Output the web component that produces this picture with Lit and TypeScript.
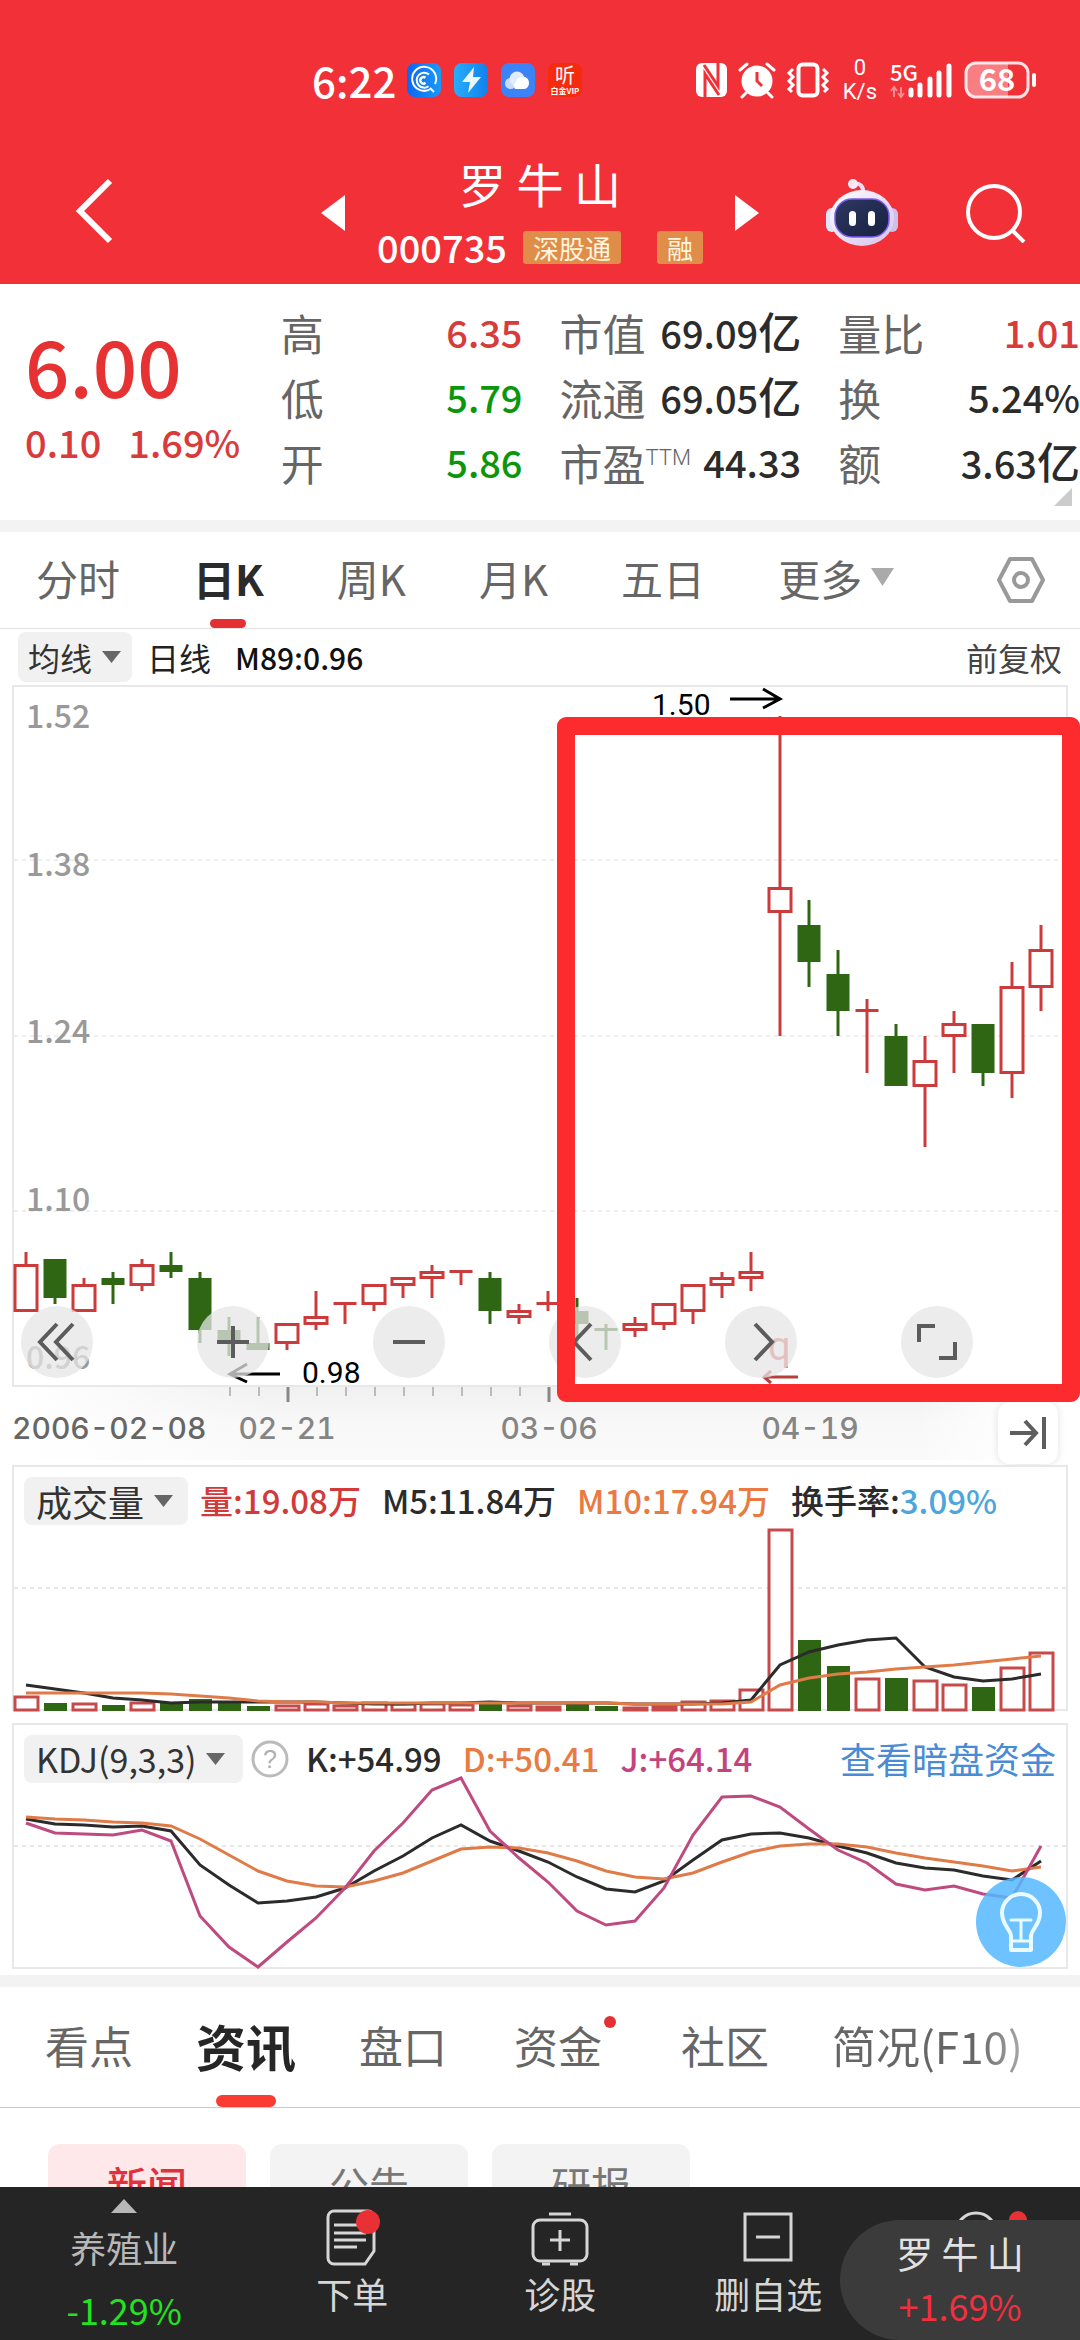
import { LitElement, html, svg, css, nothing } from "lit";
import { customElement, state } from "lit/decorators.js";

type Candle = { up: boolean; high: number; top: number; bottom: number; low: number };

const FIRST_X = 26;
const STEP = 29;
const xAt = (i: number) => FIRST_X + STEP * i;

// direction, high, body top, body bottom, low (plot units)
const CANDLES: Candle[] = (
  [
    [1, 1252, 1264, 1312, 1312], [0, 1259, 1259, 1298, 1304], [1, 1278, 1284, 1312, 1312],
    [0, 1272, 1278, 1285, 1304], [1, 1259, 1264, 1286, 1291], [0, 1252, 1265, 1272, 1278],
    [0, 1272, 1278, 1330, 1343], [0, 1317, 1330, 1343, 1356], [0, 1317, 1343, 1350, 1350],
    [1, 1323, 1323, 1344, 1350], [1, 1291, 1316, 1325, 1330], [1, 1302, 1302, 1305, 1324],
    [1, 1284, 1284, 1305, 1311], [1, 1277, 1277, 1286, 1298], [1, 1265, 1271, 1279, 1298],
    [1, 1270, 1270, 1273, 1285], [0, 1272, 1278, 1311, 1324], [1, 1304, 1310, 1318, 1324],
    [1, 1291, 1302, 1305, 1311], [0, 1298, 1311, 1324, 1343], [0, 1324, 1328, 1331, 1350],
    [1, 1317, 1323, 1331, 1337], [1, 1303, 1303, 1325, 1330], [1, 1284, 1284, 1312, 1324],
    [1, 1272, 1277, 1286, 1298], [1, 1252, 1271, 1279, 1291], [1, 716, 887, 913, 1036],
    [0, 900, 925, 962, 987], [0, 950, 974, 1011, 1036], [1, 999, 1009, 1012, 1073],
    [0, 1024, 1036, 1086, 1086], [1, 1036, 1060, 1087, 1147], [1, 1011, 1023, 1037, 1073],
    [0, 1024, 1024, 1073, 1086], [1, 962, 986, 1074, 1098], [1, 925, 949, 988, 1011],
  ] as number[][]
).map(([up, high, top, bottom, low]) => ({ up: up === 1, high, top, bottom, low }));

const VOLUME_TOPS = [
  1696, 1703, 1703, 1705, 1702, 1703, 1699, 1703, 1706, 1705, 1703, 1705, 1702, 1703, 1703, 1704, 1704, 1705,
  1706, 1704, 1706, 1707, 1706, 1701, 1700, 1689, 1529, 1640, 1666, 1678, 1678, 1680, 1684, 1687, 1667, 1652,
];
const M5 = [
  1685, 1689, 1693, 1698, 1700, 1703, 1702, 1702, 1702, 1702, 1702, 1703, 1704, 1704, 1703, 1703, 1702, 1703,
  1703, 1703, 1703, 1704, 1704, 1704, 1703, 1700, 1665, 1652, 1645, 1640, 1638, 1667, 1677, 1681, 1679, 1674,
];
const M10 = [
  1693, 1693, 1693, 1693, 1693, 1694, 1696, 1698, 1701, 1702, 1702, 1703, 1703, 1703, 1703, 1703, 1703, 1703,
  1703, 1703, 1703, 1704, 1704, 1704, 1704, 1702, 1685, 1678, 1674, 1672, 1669, 1667, 1665, 1662, 1659, 1656,
];
const K = [
  1819, 1824, 1825, 1827, 1826, 1831, 1865, 1885, 1903, 1901, 1897, 1888, 1871, 1856, 1838, 1825, 1841, 1851,
  1862, 1877, 1889, 1892, 1881, 1860, 1840, 1834, 1833, 1838, 1846, 1853, 1863, 1868, 1870, 1876, 1880, 1861,
];
const D = [
  1817, 1819, 1820, 1822, 1823, 1826, 1839, 1855, 1871, 1881, 1886, 1887, 1881, 1873, 1861, 1849, 1847, 1848,
  1853, 1861, 1871, 1877, 1879, 1873, 1862, 1852, 1846, 1844, 1844, 1847, 1853, 1858, 1862, 1866, 1871, 1867,
];
const J = [
  1823, 1833, 1834, 1835, 1830, 1841, 1916, 1947, 1967, 1942, 1918, 1888, 1851, 1823, 1790, 1778, 1831, 1858,
  1882, 1911, 1925, 1921, 1888, 1835, 1797, 1796, 1807, 1829, 1850, 1863, 1884, 1890, 1886, 1894, 1898, 1846,
];

const points = (ys: number[]) => ys.map((y, i) => `${xAt(i)},${y}`).join(" ");

const caret = html`<svg class="caret" viewBox="0 0 20 12" preserveAspectRatio="none" aria-hidden="true"><path d="M0 0H20L10 12Z" fill="currentColor" /></svg>`;

@customElement("status-bar")
export class StatusBar extends LitElement {
  static styles = css`
    :host { display: flex; align-items: center; justify-content: space-between; height: 60px; padding: 50px 42px 32px 312px; color: #fff; }
    .left, .right { display: flex; align-items: center; }
    .time { font-size: 42px; line-height: 48px; font-weight: 500; margin-right: 11px; }
    .apps { display: flex; gap: 13px; }
    .app { width: 34px; height: 34px; display: block; overflow: visible; }
    .right { gap: 10px; }
    .speed { display: flex; flex-direction: column; align-items: center; font-family: Roboto, sans-serif; font-size: 22px; line-height: 24px; padding: 0 3px; }
    .ico { display: block; height: 38px; overflow: visible; }
  `;
  render() {
    return html`
      <div class="left">
        <span class="time">6:22</span>
        <div class="apps">
          <svg class="app" viewBox="0 0 34 34" aria-hidden="true">
            <defs><linearGradient id="a" x1="0" x2="1"><stop offset="0" stop-color="#0b66f5" /><stop offset="1" stop-color="#1a9af8" /></linearGradient></defs>
            <rect width="34" height="34" rx="8" fill="url(#a)" />
            <g fill="none" stroke="#fff" stroke-width="2">
              <path d="M23.500 26A12 12 0 1 1 28 21" />
              <path d="M21.500 23.300A7.500 7.500 0 1 1 22 11.400" />
              <path d="M18.500 19.800A3.200 3.200 0 1 1 18.500 14.800" stroke-width="2.400" />
              <path d="M23 25L27 29" />
            </g>
          </svg>
          <svg class="app" viewBox="0 0 34 34" aria-hidden="true">
            <defs><linearGradient id="b" x1="0" x2="1"><stop offset="0" stop-color="#28adfb" /><stop offset="1" stop-color="#1181ec" /></linearGradient></defs>
            <rect width="34" height="34" rx="8" fill="url(#b)" />
            <path d="M20 4L8 19H16L14 30L27 14H19Z" fill="#e9f8ff" />
          </svg>
          <svg class="app" viewBox="0 0 34 34" aria-hidden="true">
            <rect width="34" height="34" rx="8" fill="#3b83f6" />
            <circle cx="9.500" cy="20.500" r="5.500" fill="#c5dcfd" />
            <circle cx="16" cy="16" r="7.500" fill="#e0edff" />
            <path d="M14 26A5 5 0 0 1 15 19A7 7 0 0 1 24 14A6.500 6.500 0 0 1 24 26Z" fill="#fff" />
          </svg>
          <svg class="app" viewBox="0 0 34 34" aria-hidden="true">
            <rect width="34" height="34" rx="8" fill="#f62a0c" />
            <text x="17" y="20" font-size="20" fill="#fff" text-anchor="middle">听</text>
            <text x="17" y="31" font-size="8" font-weight="700" fill="#fff" text-anchor="middle">白金VIP</text>
          </svg>
        </div>
      </div>
      <div class="right">
        <svg class="ico" width="32" viewBox="0 0 32 38" role="img" aria-label="NFC">
          <rect x="0" y="2" width="31" height="34" rx="6" fill="#fff" />
          <path d="M9 36V13L23 34M22 2V25L8 4" fill="none" stroke="#f23038" stroke-width="3" />
        </svg>
        <svg class="ico" width="38" viewBox="0 0 38 38" role="img" aria-label="Alarm">
          <circle cx="19" cy="20" r="15.500" fill="#fff" />
          <path d="M19 11V20L24 25" fill="none" stroke="#f23038" stroke-width="3" />
          <path d="M2 9L9 3M36 9L29 3M8 32L4 36M30 32L34 36" stroke="#fff" stroke-width="3" stroke-linecap="round" />
        </svg>
        <svg class="ico" width="44" viewBox="0 0 44 38" role="img" aria-label="Vibrate">
          <rect x="12.500" y="3.500" width="19" height="31" rx="4" fill="none" stroke="#fff" stroke-width="4" />
          <path d="M7 8L3 12L7 16L3 20L7 24L3 28L6 31M37 8L41 12L37 16L41 20L37 24L41 28L38 31" fill="none" stroke="#fff" stroke-width="3" />
        </svg>
        <div class="speed"><span>0</span><span>K/s</span></div>
        <svg class="ico" width="64" viewBox="0 0 64 38" role="img" aria-label="5G signal">
          <text x="0" y="20" font-size="22" font-weight="500" fill="#fff">5G</text>
          <path d="M4 36V27M1 30L4 26L7 30M11 26V35M8 32L11 36L14 32" fill="none" stroke="#fa8c8f" stroke-width="2" />
          <path d="M21 29V34M30 24V34M40 18V34M49 12V34M59 5V34" stroke="#fff" stroke-width="5" stroke-linecap="round" />
        </svg>
        <svg class="ico" width="74" viewBox="0 0 74 38" role="img" aria-label="Battery 68%">
          <path d="M10 2H44V36H10A8 8 0 0 1 2 28V10A8 8 0 0 1 10 2Z" fill="#f87e82" />
          <rect x="2" y="2" width="62" height="34" rx="10" fill="none" stroke="#fff" stroke-opacity=".85" stroke-width="3" />
          <path d="M70 14V24" stroke="#fff" stroke-width="4" stroke-linecap="round" />
          <text x="33" y="30" font-size="31" font-weight="700" fill="#fff" text-anchor="middle">68</text>
        </svg>
      </div>
    `;
  }
}

@customElement("stock-nav")
export class StockNav extends LitElement {
  static styles = css`
    :host { display: grid; grid-template-columns: 1fr 438px 1fr; align-items: center; height: 142px; color: #fff; }
    button { background: none; border: 0; padding: 0; margin: 0; display: block; }
    svg { display: block; }
    .back { margin: 0 0 4px 74px; }
    .title { display: flex; align-items: center; justify-content: space-between; }
    .lines { display: flex; flex-direction: column; align-items: center; padding-top: 4px; }
    h1 { margin: 0; font-size: 47px; line-height: 64px; font-weight: 400; white-space: pre; }
    .sub { display: flex; align-items: center; height: 64px; gap: 16px; }
    .code { font-size: 38px; line-height: 48px; font-weight: 500; }
    .badge { background: #e08d4a; color: #fff6df; font-size: 26px; line-height: 33px; padding: 0 10px; border-radius: 3px; }
    .badge + .badge { margin-left: 20px; }
    .tools { display: flex; align-items: center; justify-content: flex-end; gap: 68px; padding-right: 54px; }
  `;
  render() {
    return html`
      <button class="back" aria-label="返回">
        <svg width="40" height="68" viewBox="0 0 40 68"><path d="M36 4L6 34L36 64" fill="none" stroke="#fff" stroke-width="6" /></svg>
      </button>
      <div class="title">
        <button aria-label="上一只"><svg width="24" height="36" viewBox="0 0 24 36"><path d="M24 0V36L0 18Z" fill="#fff" /></svg></button>
        <div class="lines">
          <h1>罗 牛 山</h1>
          <div class="sub"><span class="code">000735</span><span class="badge">深股通</span><span class="badge">融</span></div>
        </div>
        <button aria-label="下一只"><svg width="24" height="36" viewBox="0 0 24 36"><path d="M0 0V36L24 18Z" fill="#fff" /></svg></button>
      </div>
      <div class="tools">
        <button aria-label="智能助手">
          <svg width="72" height="70" viewBox="0 0 72 70">
            <defs>
              <linearGradient id="head" x1="0" y1="0" x2="1" y2="1"><stop offset="0" stop-color="#ffffff" /><stop offset="1" stop-color="#d5c2ee" /></linearGradient>
              <linearGradient id="face" x1="0" y1="0" x2="1" y2="1"><stop offset="0" stop-color="#2e3863" /><stop offset="1" stop-color="#18213f" /></linearGradient>
            </defs>
            <path d="M27 6C34 4 38 9 37 15" fill="none" stroke="#e9dcf5" stroke-width="4" />
            <circle cx="27" cy="6" r="5" fill="#fbe9f3" />
            <rect x="0" y="30" width="12" height="24" rx="6" fill="#dfe6fa" />
            <rect x="60" y="30" width="12" height="24" rx="6" fill="#cfc0ea" />
            <ellipse cx="36" cy="40" rx="32" ry="28" fill="url(#head)" />
            <rect x="9" y="21" width="54" height="38" rx="17" fill="url(#face)" stroke="#7a5cf0" stroke-width="1.500" />
            <rect x="23" y="33" width="7" height="15" rx="3.500" fill="#fff" />
            <rect x="42" y="33" width="7" height="15" rx="3.500" fill="#fff" />
          </svg>
        </button>
        <button aria-label="搜索">
          <svg width="60" height="60" viewBox="0 0 60 60"><circle cx="28" cy="29" r="26" fill="none" stroke="#fff" stroke-width="4" /><path d="M46 47L58 59" stroke="#fff" stroke-width="4" /></svg>
        </button>
      </div>
    `;
  }
}

const QUOTES: { label: string; sup?: string; value: string; unit?: string; tone: string }[][] = [
  [
    { label: "高", value: "6.35", tone: "up" },
    { label: "低", value: "5.79", tone: "down" },
    { label: "开", value: "5.86", tone: "down" },
  ],
  [
    { label: "市值", value: "69.09", unit: "亿", tone: "flat" },
    { label: "流通", value: "69.05", unit: "亿", tone: "flat" },
    { label: "市盈", sup: "TTM", value: "44.33", tone: "flat" },
  ],
  [
    { label: "量比", value: "1.01", tone: "up" },
    { label: "换", value: "5.24%", tone: "flat" },
    { label: "额", value: "3.63", unit: "亿", tone: "flat" },
  ],
];

@customElement("quote-panel")
export class QuotePanel extends LitElement {
  static styles = css`
    :host { display: grid; grid-template-columns: 26% 1fr; height: 236px; position: relative; }
    .last { padding: 34px 0 0 25px; color: #e63232; }
    .price { font-size: 78px; line-height: 92px; font-weight: 500; }
    .change { display: flex; gap: 27px; margin-top: 6px; font-size: 38px; line-height: 52px; font-weight: 500; color: #d93a3a; }
    .cols { display: grid; grid-template-columns: repeat(3, 1fr); gap: 37px; padding-top: 15px; }
    dl { margin: 0; }
    .pair { display: flex; justify-content: space-between; align-items: center; height: 65px; white-space: nowrap; }
    dt { font-size: 43px; line-height: 60px; color: #666; display: flex; }
    dd { margin: 0; font-size: 38px; line-height: 60px; font-weight: 500; }
    .unit { font-size: 43px; }
    sup { font-size: 22px; line-height: 28px; font-family: Roboto, sans-serif; padding-top: 12px; font-weight: 300; }
    .up { color: #d93a3a; }
    .down { color: #0c960c; }
    .flat { color: #2b2b2b; }
    .more { position: absolute; right: 8px; bottom: 14px; width: 18px; height: 18px; }
  `;
  render() {
    return html`
      <div class="last">
        <div class="price">6.00</div>
        <div class="change"><span>0.10</span><span>1.69%</span></div>
      </div>
      <div class="cols">
        ${QUOTES.map(
          (col) => html`<dl>${col.map(
            (q) => html`<div class="pair"><dt>${q.label}${q.sup ? html`<sup>${q.sup}</sup>` : nothing}</dt><dd class=${q.tone}>${q.value}${q.unit ? html`<span class="unit">${q.unit}</span>` : nothing}</dd></div>`
          )}</dl>`
        )}
      </div>
      <svg class="more" viewBox="0 0 18 18" aria-hidden="true"><path d="M18 0V18H0Z" fill="#ccc" /></svg>
    `;
  }
}

const pillStyles = css`
  select { appearance: none; border: 0; padding: 0; margin: 0; background: none; font: inherit; color: inherit; }
  .pill { display: flex; align-items: center; gap: 9px; background: #f1f1f1; border-radius: 8px; color: #333; }
  .caret { width: 19px; height: 12px; color: #666; }
`;

@customElement("period-tabs")
export class PeriodTabs extends LitElement {
  static styles = [
    pillStyles,
    css`
      :host { display: block; }
      nav { display: flex; align-items: stretch; height: 96px; gap: 73px; padding: 0 34px 0 36px; border-bottom: 1px solid #e3e3e3; }
      button { background: none; border: 0; padding: 0; font: inherit; color: inherit; position: relative; }
      .tab { font-size: 42px; color: #666; padding-bottom: 6px; }
      .tab.on { color: #2b2b2b; font-weight: 700; }
      .tab.on::after { content: ""; position: absolute; bottom: 0; left: 50%; width: 36px; height: 9px; margin-left: -18px; border-radius: 5px; background: #e33033; }
      .more { display: flex; align-items: center; gap: 8px; }
      .more .caret { width: 23px; height: 18px; color: #aaa; }
      .gear { margin-left: auto; display: flex; align-items: center; }
      .bar { display: flex; align-items: center; height: 55px; padding: 0 18px; font-size: 32px; color: #222; }
      .pill { padding: 0 11px 0 10px; height: 50px; }
      .kind { margin-left: 15px; }
      .ma { margin-left: 24px; font-size: 30px; font-weight: 500; color: #111; }
      .adj { margin-left: auto; color: #444; }
    `,
  ];
  @state() private active = "日K";
  render() {
    return html`
      <nav>
        ${["分时", "日K", "周K", "月K", "五日"].map(
          (t) => html`<button class="tab ${t === this.active ? "on" : ""}" @click=${() => (this.active = t)}>${t}</button>`
        )}
        <label class="tab more"><select aria-label="更多周期"><option>更多</option></select>${caret}</label>
        <button class="gear" aria-label="设置">
          <svg width="50" height="48" viewBox="0 0 50 48" fill="none" stroke="#999" stroke-width="4">
            <path d="M14 3H36L47 24L36 45H14L3 24Z" stroke-linejoin="round" /><circle cx="25" cy="24" r="7" />
          </svg>
        </button>
      </nav>
      <div class="bar">
        <label class="pill"><select aria-label="主图指标"><option>均线</option></select>${caret}</label>
        <span class="kind">日线</span><span class="ma">M89:0.96</span>
        <button class="adj">前复权</button>
      </div>
    `;
  }
}

@customElement("kline-chart")
export class KlineChart extends LitElement {
  static styles = css`
    :host { display: block; position: relative; }
    .plot { display: block; width: 100%; }
    .axis { font-size: 32px; fill: #999; font-weight: 500; }
    .note { font-family: Roboto, sans-serif; font-size: 30px; fill: #000; }
    .date { font-family: Inter, sans-serif; font-size: 30px; font-weight: 500; fill: #858585; font-variant-numeric: tabular-nums; }
    .date.first { fill: #666; }
    .controls { position: absolute; left: 21px; top: 622px; display: flex; gap: 104px; }
    button { border: 0; padding: 0; }
    .round { width: 72px; height: 72px; border-radius: 50%; background: rgba(229, 229, 229, 0.75); }
    .round svg, .end svg { display: block; margin: auto; }
    .end { position: absolute; right: 22px; top: 718px; width: 60px; height: 62px; border-radius: 12px; background: #fff; box-shadow: 0 0 8px rgba(0, 0, 0, 0.12); }
    .mark { position: absolute; left: 51.6%; right: 0; top: 33px; height: 649px; border: 18px solid #fd2b2e; border-radius: 9px; pointer-events: none; }
  `;
  private candle(c: Candle, i: number) {
    const x = xAt(i);
    const color = c.up ? "#cb3b3b" : "#2f6614";
    const h = c.bottom - c.top;
    const hollow = c.up && h > 4;
    return svg`
      ${c.high < c.top ? svg`<path d="M${x} ${c.high}V${c.top}" stroke=${color} stroke-width="3" />` : nothing}
      ${c.low > c.bottom ? svg`<path d="M${x} ${c.bottom}V${c.low}" stroke=${color} stroke-width="3" />` : nothing}
      ${hollow
        ? svg`<rect x=${x - 11} y=${c.top + 1.5} width="22" height=${h - 3} fill="#fff" stroke=${color} stroke-width="3" />`
        : svg`<rect x=${x - 11.5} y=${c.top} width="23" height=${h} fill=${color} />`}
    `;
  }
  private icon(kind: number) {
    const shapes = [
      "M36 16L19 34L36 52M52 16L35 34L52 52",
      "M20 34H52M36 18V50",
      "M20 34H52",
      "M42 16L25 34L42 52",
      "M30 16L47 34L30 52",
      "M18 34V18H34M54 34V50H38",
    ];
    return html`<svg width="72" height="72" viewBox="0 -2 72 72"><path d=${shapes[kind]} fill="none" stroke="#5c5c5c" stroke-width="4" /></svg>`;
  }
  render() {
    const minor = Array.from({ length: 13 }, (_, i) => i + 7);
    return html`
      <svg class="plot" viewBox="0 684 1080 776">
        <defs>
          <linearGradient id="shade" x1="0" x2="0" y1="0" y2="1"><stop offset="0" stop-color="#f0f0f0" /><stop offset=".5" stop-color="#f8f8f8" /><stop offset="1" stop-color="#fafafa" /></linearGradient>
          <linearGradient id="side" x1="0" x2="1"><stop offset=".02" stop-color="#fff" /><stop offset=".25" stop-color="#fff" stop-opacity="0" /><stop offset=".85" stop-color="#fff" stop-opacity="0" /><stop offset=".94" stop-color="#fff" /></linearGradient>
        </defs>
        <rect x="0" y="1386" width="1080" height="74" fill="url(#shade)" />
        <rect x="0" y="1386" width="1080" height="74" fill="url(#side)" />
        <rect x="13" y="686" width="1054" height="700" fill="#fff" stroke="#e8e8e8" stroke-width="2" />
        ${[860, 1036, 1211].map((y) => svg`<path d="M14 ${y}H1066" stroke="#dcdcdc" stroke-width="1" stroke-dasharray="4 4" />`)}
        ${[["1.52", 728], ["1.38", 876], ["1.24", 1043], ["1.10", 1211], ["0.96", 1369]].map(
          ([t, y]) => svg`<text class="axis" x="26" y=${y}>${t}</text>`
        )}
        ${minor.map((i) => svg`<path d="M${xAt(i) + 1} 1387V1396" stroke="#bbb" stroke-width="2" />`)}
        ${[9, 18, 27].map((i) => svg`<path d="M${xAt(i) + 1} 1387V1402" stroke="#888" stroke-width="3" />`)}
        ${CANDLES.map((c, i) => this.candle(c, i))}
        <text class="note" x="652" y="715">1.50</text>
        <path d="M730 699H780M763 689L780 699L763 708" fill="none" stroke="#000" stroke-width="3" />
        <text class="note" x="302" y="1383">0.98</text>
        <path d="M280 1374H230M247 1364L230 1374L247 1382" fill="none" stroke="#000" stroke-width="3" />
        <text x="768" y="1360" font-family="Roboto" font-size="40" fill="#d9534f">q</text>
        <path d="M798 1377H764M771 1371L764 1377L771 1383" fill="none" stroke="#b8403c" stroke-width="3" />
        <text class="date first" x="12" y="1439">2006-02-08</text>
        <text class="date" x="287" y="1439" text-anchor="middle">02-21</text>
        <text class="date" x="549" y="1439" text-anchor="middle">03-06</text>
        <text class="date" x="810" y="1439" text-anchor="middle">04-19</text>
      </svg>
      <div class="controls">
        ${["最早", "放大", "缩小", "左移", "右移", "全屏"].map(
          (name, i) => html`<button class="round" aria-label=${name}>${this.icon(i)}</button>`
        )}
      </div>
      <button class="end" aria-label="最新">
        <svg width="40" height="36" viewBox="0 0 40 36" fill="none" stroke="#5e5e5e" stroke-width="4"><path d="M2 18H27M17 6L28 18L17 30M36 2V34" /></svg>
      </button>
      <div class="mark"></div>
    `;
  }
}

const legendStyles = css`
  :host { display: grid; position: relative; }
  .plot, .legend { grid-area: 1 / 1; }
  .plot { display: block; width: 100%; }
  .legend { display: flex; align-items: center; align-self: start; height: 48px; font-size: 33px; line-height: 44px; gap: 21px; padding: 0 24px; font-weight: 500; color: #2b2b2b; white-space: nowrap; z-index: 1; }
  .legend > span { padding-bottom: 3px; }
  .pill { padding: 0 15px 0 12px; height: 48px; font-weight: 400; }
  .orange { color: #e87a42; }
`;

@customElement("volume-chart")
export class VolumeChart extends LitElement {
  static styles = [
    pillStyles,
    legendStyles,
    css`
      .legend { margin-top: 17px; }
      .pill { font-size: 36px; margin-right: -9px; }
      .red { color: #d23a3a; }
      .blue { color: #4aa6dc; }
    `,
  ];
  render() {
    return html`
      <svg class="plot" viewBox="0 1460 1080 256">
        <rect x="13" y="1466" width="1054" height="244" fill="#fff" stroke="#e8e8e8" stroke-width="2" />
        <path d="M14 1588H1066" stroke="#e8e8e8" stroke-width="2" stroke-dasharray="4 4" />
        ${VOLUME_TOPS.map((y, i) => {
          const x = xAt(i);
          const h = 1711 - y;
          return CANDLES[i].up
            ? svg`<rect x=${x - 11} y=${y + 1} width="23" height=${Math.max(h - 2, 2)} fill="#fff" stroke="#c64a4a" stroke-width="3" />`
            : svg`<rect x=${x - 11} y=${y} width="23" height=${h} fill="#2f6614" />`;
        })}
        <polyline points=${points(M5)} fill="none" stroke="#2b2b2b" stroke-width="3" />
        <polyline points=${points(M10)} fill="none" stroke="#e07b48" stroke-width="3" />
      </svg>
      <div class="legend">
        <label class="pill"><select aria-label="副图指标"><option>成交量</option></select>${caret}</label>
        <span class="red">量:19.08万</span><span>M5:11.84万</span><span class="orange">M10:17.94万</span>
        <span>换手率:<span class="blue">3.09%</span></span>
      </div>
    `;
  }
}

@customElement("kdj-chart")
export class KdjChart extends LitElement {
  static styles = [
    pillStyles,
    legendStyles,
    css`
      .legend { margin-top: 19px; padding-right: 24px; }
      .pink { color: #c5437c; }
      .pill { padding-right: 18px; font-size: 34px; }
      .help { margin: 0 -4px 0 -13px; border: 0; padding: 0; background: none; }
      .help svg { display: block; overflow: visible; }
      a { margin-left: auto; font-size: 36px; color: #4a8bd6; text-decoration: none; padding-bottom: 3px; font-weight: 400; }
      .tip { position: absolute; right: 14px; top: 161px; width: 90px; height: 90px; border: 0; padding: 0; border-radius: 50%; background: rgba(84, 183, 255, 0.85); z-index: 2; }
      .tip svg { display: block; margin: auto; }
    `,
  ];
  render() {
    return html`
      <svg class="plot" viewBox="0 1716 1080 259">
        <rect x="13" y="1724" width="1054" height="244" fill="#fff" stroke="#e8e8e8" stroke-width="2" />
        <path d="M14 1846H1066" stroke="#e8e8e8" stroke-width="2" stroke-dasharray="4 4" />
        <polyline points=${points(K)} fill="none" stroke="#2b2b2b" stroke-width="3" />
        <polyline points=${points(D)} fill="none" stroke="#e07b48" stroke-width="3" />
        <polyline points=${points(J)} fill="none" stroke="#bf4a80" stroke-width="3" />
      </svg>
      <div class="legend">
        <label class="pill"><select aria-label="副图指标"><option>KDJ(9,3,3)</option></select>${caret}</label>
        <button class="help" aria-label="指标说明">
          <svg width="38" height="38" viewBox="0 0 38 38"><circle cx="19" cy="19" r="17" fill="none" stroke="#bbb" stroke-width="3" /><text x="19" y="28" font-size="25" text-anchor="middle" fill="#b0b0b0">?</text></svg>
        </button>
        <span>K:+54.99</span><span class="orange">D:+50.41</span><span class="pink">J:+64.14</span>
        <a href="#funds">查看暗盘资金</a>
      </div>
      <button class="tip" aria-label="提示">
        <svg width="46" height="62" viewBox="0 0 46 62" fill="none" stroke="#e9fbff" stroke-width="4" stroke-linejoin="round" stroke-linecap="round">
          <path d="M13 59V45C13 39 4 34 4 22A19 19 0 0 1 42 22C42 34 33 39 33 45V59Z" />
          <path d="M13 29H33M23 29V49M14 50H32" stroke-width="3" />
        </svg>
      </button>
    `;
  }
}

@customElement("info-tabs")
export class InfoTabs extends LitElement {
  static styles = css`
    :host { display: block; }
    button { background: none; border: 0; padding: 0; font: inherit; color: inherit; }
    nav { display: flex; height: 120px; padding: 0 45px; gap: 63px; border-bottom: 1px solid #c9c9c9; white-space: nowrap; }
    .tab { position: relative; font-size: 44px; color: #666; padding-bottom: 5px; }
    .tab.on { font-size: 50px; font-weight: 700; color: #262626; }
    .tab.on::after { content: ""; position: absolute; bottom: 0; left: 50%; width: 60px; height: 12px; margin-left: -30px; border-radius: 6px; background: #fb3c33; }
    .tab.dot { padding: 0 16px 5px 4px; }
    .tab.dot::after { content: ""; position: absolute; right: 2px; top: 29px; width: 12px; height: 12px; border-radius: 50%; background: #e33033; }
    .fade { background: linear-gradient(90deg, #666 75%, #aaa); background-clip: text; color: transparent; }
    .chips { display: flex; gap: 24px; padding: 36px 48px; }
    .chip { width: 198px; height: 84px; border-radius: 12px; background: #f3f3f3; color: #777; font-size: 40px; padding-bottom: 4px; }
    .chip.on { background: #fee8e9; color: #e0323c; font-weight: 500; }
  `;
  render() {
    return html`
      <nav>
        <button class="tab">看点</button><button class="tab on">资讯</button><button class="tab">盘口</button>
        <button class="tab dot">资金</button><button class="tab">社区</button><button class="tab"><span class="fade">简况(F10)</span></button>
      </nav>
      <div class="chips"><button class="chip on">新闻</button><button class="chip">公告</button><button class="chip">研报</button></div>
    `;
  }
}

@customElement("bottom-bar")
export class BottomBar extends LitElement {
  static styles = css`
    :host { display: grid; grid-template-columns: 23% repeat(4, 1fr); height: 153px; background: #252525; color: #d6d6d6; position: relative; }
    button { background: none; border: 0; padding: 0; font: inherit; color: inherit; font-size: 36px; display: flex; flex-direction: column; align-items: center; }
    svg { display: block; }
    .index { padding-top: 12px; color: #b8b8b8; }
    .index .name { line-height: 48px; margin-top: 10px; }
    .index .pct { line-height: 48px; margin-top: 14px; color: #22e322; }
    .item { padding-top: 18px; }
    .item .name { line-height: 48px; }
    .float { position: absolute; right: 0; bottom: 0; width: 240px; height: 120px; border-radius: 60px 0 0 60px; background: #3b3b3b; color: #e2e2e2; white-space: pre; }
    .float .name { font-size: 37px; line-height: 52px; margin-top: 7px; }
    .float .pct { line-height: 52px; color: #f0303f; }
  `;
  render() {
    return html`
      <button class="index">
        <svg width="26" height="14" viewBox="0 0 26 14"><path d="M13 0L26 14H0Z" fill="#b8b8b8" /></svg>
        <span class="name">养殖业</span><span class="pct">-1.29%</span>
      </button>
      <button class="item">
        <svg width="60" height="64" viewBox="0 0 60 64" fill="none" stroke="#d6d6d6" stroke-width="3">
          <path d="M12 6H46A6 6 0 0 1 52 12V46L43 59H12A6 6 0 0 1 6 53V12A6 6 0 0 1 12 6Z" />
          <path d="M12 20H38M12 28H44M12 35H44M12 42H35" />
          <circle cx="46" cy="17" r="12" fill="#e83035" stroke="none" />
        </svg>
        <span class="name">下单</span>
      </button>
      <button class="item">
        <svg width="60" height="64" viewBox="0 0 60 64" fill="none" stroke="#d6d6d6" stroke-width="3">
          <rect x="3" y="15" width="54" height="41" rx="7" /><path d="M19 9H41M30 25V46M20 35H40M12 59H20M40 59H48" />
        </svg>
        <span class="name">诊股</span>
      </button>
      <button class="item">
        <svg width="60" height="64" viewBox="0 0 60 64" fill="none" stroke="#d6d6d6" stroke-width="3">
          <rect x="7" y="9" width="46" height="46" /><path d="M18 32H42" />
        </svg>
        <span class="name">删自选</span>
      </button>
      <button class="item" aria-label="更多">
        <svg width="110" height="64" viewBox="0 0 110 64" fill="none" stroke="#d6d6d6" stroke-width="3">
          <circle cx="55" cy="28" r="20" /><circle cx="97" cy="15" r="9" fill="#e83035" stroke="none" />
        </svg>
      </button>
      <button class="float"><span class="name">罗 牛 山</span><span class="pct">+1.69%</span></button>
    `;
  }
}

@customElement("app-root")
export class AppRoot extends LitElement {
  static styles = css`
    :host { display: flex; flex-direction: column; height: 100vh; background: #fff; font-family: "Noto Sans CJK SC", "Noto Sans", sans-serif; overflow: hidden; }
    header { background: #f23038; flex: none; }
    main { flex: 1; min-height: 0; overflow-y: auto; scrollbar-width: none; }
    .band { height: 12px; background: #f3f3f3; }
    bottom-bar { flex: none; }
  `;
  render() {
    return html`
      <header><status-bar></status-bar><stock-nav></stock-nav></header>
      <main>
        <quote-panel></quote-panel>
        <div class="band"></div>
        <period-tabs></period-tabs>
        <kline-chart></kline-chart>
        <volume-chart></volume-chart>
        <kdj-chart></kdj-chart>
        <div class="band"></div>
        <info-tabs></info-tabs>
      </main>
      <bottom-bar></bottom-bar>
    `;
  }
}
